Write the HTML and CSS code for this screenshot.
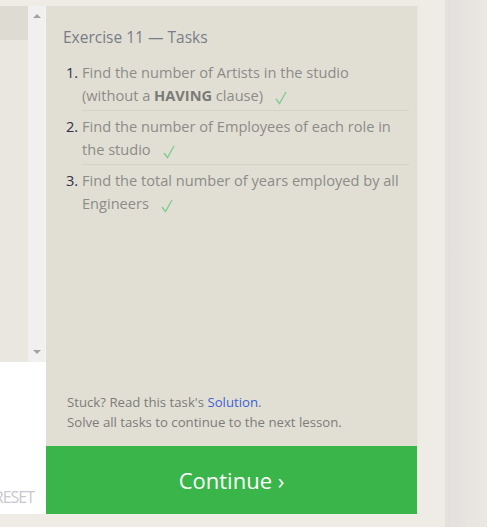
FILE: index.html
```html
<!DOCTYPE html>
<html>
<head>
<meta charset="utf-8">
<link rel="stylesheet" href="styles.css">
</head>
<body>
<div class="page">
  <div class="lesson">
    <div class="editor-col">
      <div class="editor">
        <div class="code">
          <div class="code-band"></div>
        </div>
        <div class="scrollbar">
          <span class="arrow up"></span>
          <span class="arrow down"></span>
        </div>
      </div>
      <div class="results">
        <span class="reset">RESET</span>
      </div>
    </div>
    <div class="tasks">
      <div class="tasks-body">
        <h2 class="tasks-title">Exercise 11 — Tasks</h2>
        <ol class="task-list">
          <li class="task"><span class="num">1.</span><span class="task-text">Find the number of Artists in the studio <span class="keep">(without a <b>HAVING</b> clause)<svg class="check" width="12" height="14" viewBox="0 0 12 14"><polyline points="1,8 4.5,12.5 11,1" fill="none" stroke="#80cb8d" stroke-width="1.3"/></svg></span></span></li>
          <li class="task"><span class="num">2.</span><span class="task-text">Find the number of Employees of each role in the studio<svg class="check" width="12" height="14" viewBox="0 0 12 14"><polyline points="1,8 4.5,12.5 11,1" fill="none" stroke="#80cb8d" stroke-width="1.3"/></svg></span></li>
          <li class="task last"><span class="num">3.</span><span class="task-text">Find the total number of years employed by all Engineers<svg class="check" width="12" height="14" viewBox="0 0 12 14"><polyline points="1,8 4.5,12.5 11,1" fill="none" stroke="#80cb8d" stroke-width="1.3"/></svg></span></li>
        </ol>
      </div>
      <div class="tasks-footer">
        <p>Stuck? Read this task's <a class="link">Solution</a>.</p>
        <p>Solve all tasks to continue to the next lesson.</p>
      </div>
      <div class="continue">Continue ›</div>
    </div>
  </div>
  <div class="side"></div>
</div>
</body>
</html>
```
FILE: styles.css
```css
html, body {
  margin: 0;
  padding: 0;
}
body {
  background: #efece5;
  font-family: "Open Sans", "Noto Sans", sans-serif;
  width: 487px;
  height: 527px;
  overflow: hidden;
}
.page {
  display: flex;
  height: 527px;
}
.lesson {
  display: flex;
  padding-top: 6px;
  height: 508px;
  width: 418px;
}
.editor-col {
  width: 46px;
  display: flex;
  flex-direction: column;
}
.editor {
  display: flex;
  height: 356px;
}
.code {
  width: 28px;
  background: #e9e7e0;
}
.code-band {
  height: 34px;
  background: #dddbd2;
}
.scrollbar {
  width: 17px;
  background: #f0f0f0;
  display: flex;
  flex-direction: column;
  justify-content: space-between;
  align-items: center;
  padding: 8px 0 8px;
  border-right: 1px solid #f4f3ee;
}
.arrow {
  width: 0;
  height: 0;
  border-left: 4px solid transparent;
  border-right: 4px solid transparent;
}
.arrow.up {
  border-bottom: 4px solid #a3a3a3;
}
.arrow.down {
  border-top: 4px solid #a3a3a3;
}
.results {
  flex: 1;
  background: #ffffff;
  display: flex;
  align-items: flex-end;
  justify-content: flex-end;
  overflow: hidden;
  padding-right: 12px;
  padding-bottom: 9px;
}
.reset {
  font-size: 16px;
  color: #c8c8ce;
  letter-spacing: -1px;
  line-height: 16px;
  white-space: nowrap;
}
.tasks {
  width: 371px;
  background: #e1dfd4;
  border-right: 1px solid #e8e6db;
  display: flex;
  flex-direction: column;
}
.tasks-body {
  flex: 1;
  padding: 20px 8px 0 17px;
}
.tasks-title {
  margin: 0 0 13px;
  font-size: 15.5px;
  font-weight: 400;
  color: #787d87;
  line-height: 22px;
}
.task-list {
  list-style: none;
  margin: 0;
  padding: 0;
}
.task {
  display: flex;
  font-size: 14.6px;
  line-height: 23px;
  color: #8c8c88;
}
.num {
  width: 16px;
  padding-left: 3px;
  color: #2f3347;
  flex: none;
}
.task-text {
  flex: 1;
  border-bottom: 1px solid #d5d3c8;
  padding-bottom: 3px;
  margin-bottom: 4px;
}
.task.last .task-text {
  border-bottom: none;
}
.keep {
  white-space: nowrap;
}
.task-text b {
  font-weight: 700;
  color: #7a7a76;
}
.check {
  margin-left: 12px;
  vertical-align: -4px;
}
.tasks-footer {
  padding: 0 12px 14px 21px;
  font-size: 13.2px;
  line-height: 20px;
  color: #7c7c78;
}
.tasks-footer p {
  margin: 0;
}
.link {
  color: #3d5fd6;
}
.continue {
  height: 68px;
  background: #3ab54a;
  color: #ffffff;
  font-size: 22px;
  display: flex;
  align-items: center;
  justify-content: center;
}
.side {
  margin-left: 27px;
  flex: 1;
  background: linear-gradient(to right, #e3dfdc, #ebe7e3);
}
```
